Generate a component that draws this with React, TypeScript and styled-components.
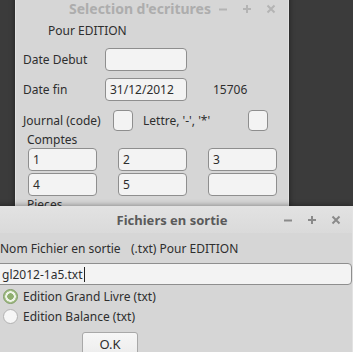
import React from "react";
import styled, { createGlobalStyle } from "styled-components";

const GlobalStyle = createGlobalStyle`
	html, body {
		margin: 0;
		padding: 0;
		background: #3b3b3b;
	}
	* {
		box-sizing: border-box;
	}
`;

const Desktop = styled.div`
	position: relative;
	width: 353px;
	height: 352px;
	overflow: hidden;
	background: #3b3b3b;
	font-family: "Noto Sans", "DejaVu Sans", sans-serif;
	font-size: 12px;
	color: #2e2e2e;
`;

const Window = styled.div<{ $left: number; $top: number; $width: number; $height: number }>`
	position: absolute;
	left: ${({ $left }) => $left}px;
	top: ${({ $top }) => $top}px;
	width: ${({ $width }) => $width}px;
	height: ${({ $height }) => $height}px;
	background: #d6d6d6;
	border: 1px solid #e2e2e2;
	box-shadow: 0 0 6px rgba(0, 0, 0, 0.45);
	display: flex;
	flex-direction: column;
`;

const TitleBar = styled.div<{ $active?: boolean; $height: number }>`
	height: ${({ $height }) => $height}px;
	flex: none;
	display: flex;
	align-items: center;
	background: ${({ $active }) => ($active ? "linear-gradient(#e2e2e2, #dadada)" : "#d6d6d6")};
	color: ${({ $active }) => ($active ? "#5a5a5a" : "#adadad")};
	font-weight: bold;
	font-size: ${({ $active }) => ($active ? 13 : 14)}px;
`;

const Title = styled.div<{ $offset: number }>`
	flex: 1;
	min-width: 0;
	text-align: center;
	white-space: nowrap;
	padding-left: ${({ $offset }) => $offset}px;
`;

const TitleButtons = styled.div<{ $pad: number }>`
	flex: none;
	display: flex;
	padding-right: ${({ $pad }) => $pad}px;
`;

const TitleButton = styled.div`
	width: 24px;
	height: 16px;
	display: flex;
	align-items: center;
	justify-content: center;
`;

const Content = styled.div<{ $pad: number }>`
	display: flex;
	flex-direction: column;
	padding-left: ${({ $pad }) => $pad}px;
`;

const Line = styled.div<{ $top?: number; $indent?: number }>`
	height: 18px;
	line-height: 18px;
	margin-top: ${({ $top }) => $top ?? 0}px;
	padding-left: ${({ $indent }) => $indent ?? 0}px;
	white-space: nowrap;
	display: flex;
	align-items: center;
`;

const FormRow = styled.div<{ $top: number; $height: number }>`
	display: flex;
	align-items: center;
	height: ${({ $height }) => $height}px;
	margin-top: ${({ $top }) => $top}px;
	white-space: nowrap;
`;

const Label = styled.span<{ $width?: number; $gap?: number }>`
	width: ${({ $width }) => ($width ? `${$width}px` : "auto")};
	margin-left: ${({ $gap }) => $gap ?? 0}px;
	flex: none;
`;

const Field = styled.div<{ $width: number; $height?: number }>`
	width: ${({ $width }) => $width}px;
	height: ${({ $height }) => $height ?? 23}px;
	flex: none;
	background: #f3f3f3;
	border: 1px solid #8e8e8e;
	border-radius: 4px;
	padding-left: 4px;
	display: flex;
	align-items: center;
	white-space: nowrap;
	overflow: hidden;
`;

const Extra = styled.span`
	margin-left: 26px;
`;

const Grid = styled.div`
	display: grid;
	grid-template-columns: repeat(3, 69px);
	column-gap: 21px;
	row-gap: 2px;
	padding-left: 5px;
`;

const SmallLabel = styled.div<{ $top: number }>`
	height: 16px;
	line-height: 16px;
	margin-top: ${({ $top }) => $top}px;
	padding-left: 4px;
`;

const WideInput = styled.div`
	margin-top: 5px;
	height: 22px;
	width: 356px;
	background: #f3f3f3;
	border: 1px solid #8e8e8e;
	border-radius: 4px;
	padding-left: 5px;
	display: flex;
	align-items: center;
`;

const Caret = styled.span`
	display: inline-block;
	width: 1px;
	height: 15px;
	background: #222;
	margin-left: 1px;
`;

const RadioRow = styled.div<{ $top?: number }>`
	height: 20px;
	margin-top: ${({ $top }) => $top ?? 0}px;
	display: flex;
	align-items: center;
	padding-left: 7px;
	gap: 5px;
`;

const RadioDot = styled.span<{ $checked?: boolean }>`
	width: 15px;
	height: 15px;
	border-radius: 50%;
	flex: none;
	border: 1px solid ${({ $checked }) => ($checked ? "#7e9a62" : "#b2b2b2")};
	background: ${({ $checked }) =>
		$checked ? "radial-gradient(circle, #8fae6f 0 3px, #eef3e8 3.5px 5px, #a6c18a 5.5px)" : "#f6f6f6"};
`;

const OkButton = styled.div`
	margin-top: 6px;
	margin-left: 86px;
	width: 56px;
	height: 26px;
	padding-top: 3px;
	line-height: 16px;
	background: linear-gradient(#f6f6f6, #ececec);
	border: 1px solid #a8a8a8;
	border-radius: 3px;
	text-align: center;
	font-size: 13px;
`;

const WinIcon: React.FC<{ kind: "min" | "max" | "close"; color: string }> = ({ kind, color }) => (
	<svg width="10" height="10" viewBox="0 0 10 10">
		{kind === "min" && <path d="M1 5.5h8" stroke={color} strokeWidth="2" />}
		{kind === "max" && <path d="M1 5h8M5 1v8" stroke={color} strokeWidth="2" />}
		{kind === "close" && <path d="M1.5 1.5l7 7M8.5 1.5l-7 7" stroke={color} strokeWidth="2" />}
	</svg>
);

const Controls: React.FC<{ color: string; pad: number }> = ({ color, pad }) => (
	<TitleButtons $pad={pad}>
		<TitleButton>
			<WinIcon kind="min" color={color} />
		</TitleButton>
		<TitleButton>
			<WinIcon kind="max" color={color} />
		</TitleButton>
		<TitleButton>
			<WinIcon kind="close" color={color} />
		</TitleButton>
	</TitleButtons>
);

const comptes = ["1", "2", "3", "4", "5", ""];

export default function App() {
	return (
		<>
			<GlobalStyle />
			<Desktop>
				<Window $left={15} $top={-4} $width={274} $height={240}>
					<TitleBar $height={23}>
						<Title $offset={53}>Selection d'ecritures</Title>
						<Controls color="#b4b4b4" pad={5} />
					</TitleBar>
					<Content $pad={7}>
						<Line $top={2} $indent={25}>
							Pour EDITION
						</Line>
						<FormRow $top={8} $height={23}>
							<Label $width={82}>Date Debut</Label>
							<Field $width={82} />
						</FormRow>
						<FormRow $top={7} $height={23}>
							<Label $width={82}>Date fin</Label>
							<Field $width={82}>31/12/2012</Field>
							<Extra>15706</Extra>
						</FormRow>
						<FormRow $top={9} $height={21}>
							<Label $width={90}>Journal (code)</Label>
							<Field $width={20} $height={21} />
							<Label $width={105} $gap={10}>
								Lettre, '-', '*'
							</Label>
							<Field $width={20} $height={21} />
						</FormRow>
						<SmallLabel $top={1}>Comptes</SmallLabel>
						<Grid>
							{comptes.map((c, i) => (
								<Field key={i} $width={69}>
									{c}
								</Field>
							))}
						</Grid>
						<SmallLabel $top={1}>Pieces</SmallLabel>
					</Content>
				</Window>
				<Window $left={-5} $top={206} $width={358} $height={150}>
					<TitleBar $active $height={26}>
						<Title $offset={72}>Fichiers en sortie</Title>
						<Controls color="#8a8a8a" pad={4} />
					</TitleBar>
					<Content $pad={0}>
						<Line $top={7} $indent={4}>
							<Label $width={131}>Nom Fichier en sortie</Label>
							<Label>(.txt) Pour EDITION</Label>
						</Line>
						<WideInput>
							gl2012-1a5.txt
							<Caret />
						</WideInput>
						<RadioRow $top={1}>
							<RadioDot $checked />
							Edition Grand Livre (txt)
						</RadioRow>
						<RadioRow>
							<RadioDot />
							Edition Balance (txt)
						</RadioRow>
						<OkButton>O.K</OkButton>
					</Content>
				</Window>
			</Desktop>
		</>
	);
}
